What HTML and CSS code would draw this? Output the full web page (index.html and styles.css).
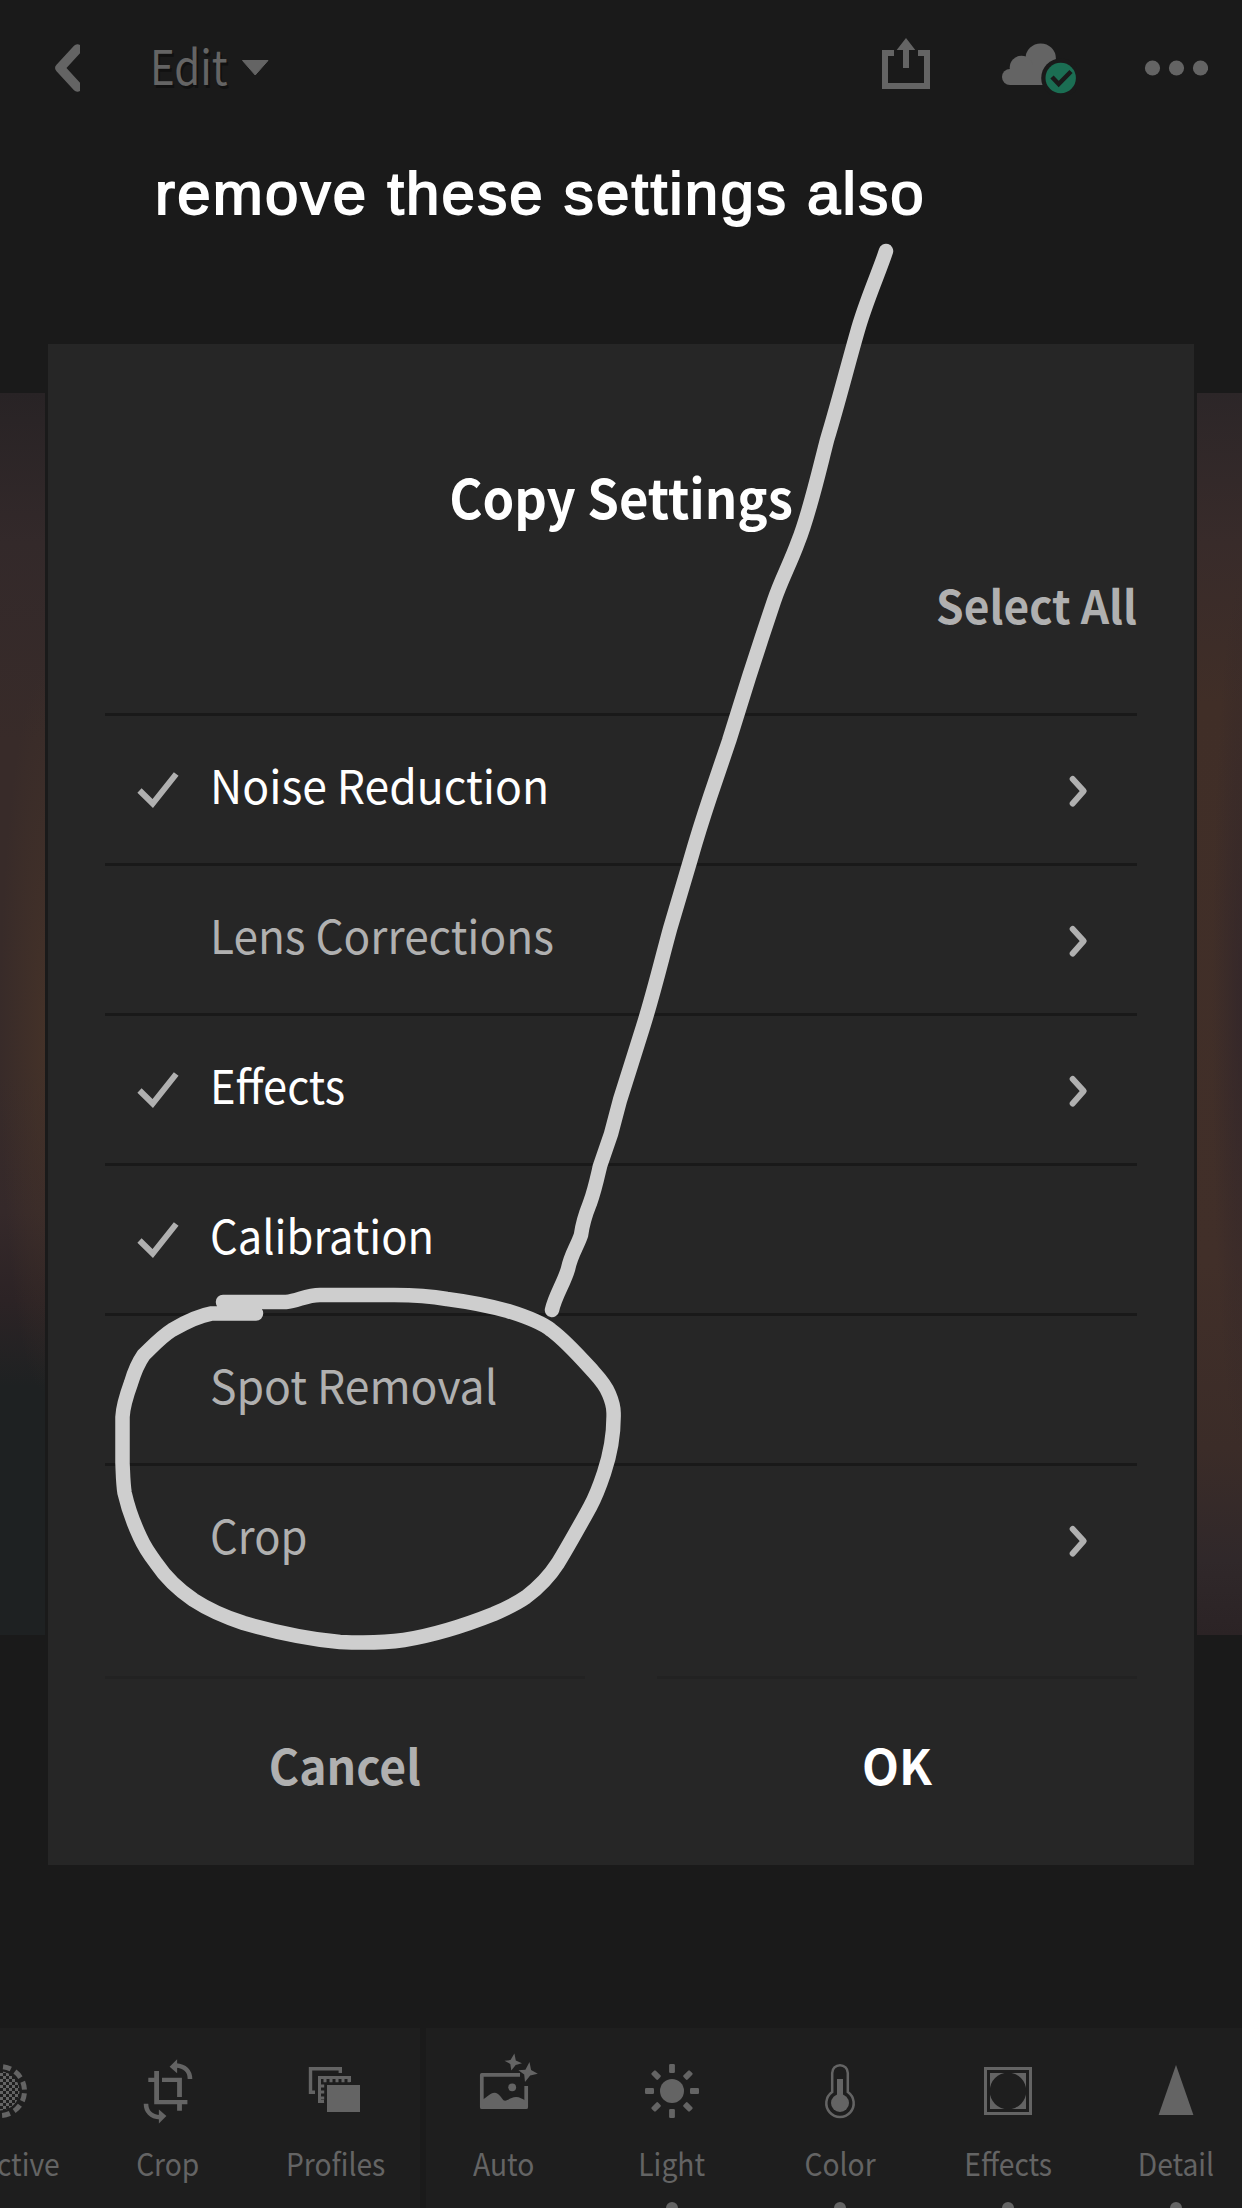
FILE: index.html
```html
<!DOCTYPE html>
<html lang="en">
<head>
<meta charset="utf-8">
<title>Copy Settings</title>
<link rel="stylesheet" href="styles.css">
</head>
<body>
<div class="app">
  <header class="topbar">
    <svg class="back" width="30" height="54" viewBox="50 41 30 54"><path d="M77.500 49 60 68l17.500 19" fill="none" stroke="#646464" stroke-width="9.500" stroke-linecap="round" stroke-linejoin="round"/></svg>
    <span class="mode">Edit</span>
    <svg class="caret" width="28" height="18" viewBox="241 60 28 18"><path d="M242.500 61.500h25.500L255.200 76z" fill="#646464" stroke="#646464" stroke-linejoin="round"/></svg>
    <svg class="share" width="50" height="54" viewBox="881 37 50 54" fill="#646464"><path d="M894 53h-9v33h42V53h-9" fill="none" stroke="#646464" stroke-width="6"/><path d="M906 38l9.300 12H909v18h-6V50h-6.300z"/></svg>
    <svg class="cloud" width="76" height="54" viewBox="1001 41 76 54">
      <g fill="#646464"><circle cx="1040.700" cy="58.600" r="15.200"/><circle cx="1021.500" cy="67.500" r="11.800"/><circle cx="1010" cy="77" r="8"/><path d="M1010 65h45v20h-45z"/></g>
      <circle cx="1060.700" cy="78" r="19.500" fill="#1a1a1a"/><circle cx="1060.700" cy="78" r="15.200" fill="#1b6e53"/>
      <path d="M1052 77l6.700 7 12.300-12.500" fill="none" stroke="#1a1a1a" stroke-width="4.500"/>
    </svg>
    <svg class="more" width="64" height="20" viewBox="1144 58 64 20" fill="#646464"><circle cx="1152.500" cy="68" r="7.600"/><circle cx="1176.500" cy="68" r="7.600"/><circle cx="1200.500" cy="68" r="7.600"/></svg>
  </header>
  <p class="note">remove these settings also</p>
  <main class="photo"></main>
  <nav class="tools">
    <div class="tool">
      <svg viewBox="-40 -40 80 80"><defs><pattern id="dots" width="6" height="6" patternUnits="userSpaceOnUse"><path d="M0 0h3v3H0zM3 3h3v3H3z" fill="#646464"/></pattern></defs><circle r="19.500" fill="url(#dots)"/><circle r="24.500" fill="none" stroke="#646464" stroke-width="5" stroke-dasharray="8 4.830" stroke-dashoffset="-2.400"/></svg>
      <span class="name">Selective</span>
    </div>
    <div class="tool">
      <svg viewBox="-40 -40 80 80" fill="#646464"><path d="M-13.800-20h4.800V9h28.400v4.300h-33.200zM-19.700-13.300h6v4.300h-6zM-6-13.300h19.900V6H9.100V-9H-6zM9.100 13.300h4.800v6.400H9.100z"/><g id="turn"><path d="M1.600-24.300L9.100-31.700v14z"/><path d="M8-25.500c9 .5 14 6 14 13.500" fill="none" stroke="#646464" stroke-width="4.600"/></g><use href="#turn" transform="rotate(180 0 .4)"/></svg>
      <span class="name">Crop</span>
    </div>
    <div class="tool">
      <svg viewBox="-40 -40 80 80"><path d="M4.300-18V-22.300H-25.500V1.200H-21" fill="none" stroke="#646464" stroke-width="3.400"/><path d="M13.500-9v-4.500h-30V10.500h4.500" fill="none" stroke="#646464" stroke-width="3"/><path d="M-12.500-10.500H14" stroke="#646464" stroke-width="3.400" stroke-dasharray="3 3"/><path d="M-13.500-6.500V12" stroke="#646464" stroke-width="3.400" stroke-dasharray="3 3"/><path d="M-9-6h33v27H-9z" fill="#646464"/></svg>
      <span class="name">Profiles</span>
    </div>
    <div class="tool first">
      <svg viewBox="-40 -40 80 80" fill="#646464"><path d="M16-16.200H-22.200V16.200H22.200V-5" fill="none" stroke="#646464" stroke-width="3.700" stroke-linejoin="round"/><path d="M-22 9C-16 6-14 1.800-9.500 1.800S-2 8-.5 9.300c3 2 7-3.200 12.500-3.200 4 0 6 2 9.500 3.500V17H-22z"/><circle cx="8.200" cy="-3.700" r="3.900"/><path d="M10.400-37.500l1.400 7 6.200 2.800-6.300 1.600-4.400 5.600-1-6.600-5.800-3.200 6-.6zM25.500-29l1.600 8 6.700 3.700-7.600 1.800-5.200 6.500-.8-7.600-5.800-4.200 7-.4z"/></svg>
      <span class="name">Auto</span>
    </div>
    <div class="tool edited">
      <svg viewBox="-40 -40 80 80"><circle r="12" fill="#646464"/><g fill="#646464"><g id="ray"><rect x="-2.900" y="-27" width="5.800" height="9" rx="1.200"/><rect x="-2.900" y="18" width="5.800" height="9" rx="1.200"/></g><use href="#ray" transform="rotate(45)"/><use href="#ray" transform="rotate(90)"/><use href="#ray" transform="rotate(135)"/></g></svg>
      <span class="name">Light</span>
    </div>
    <div class="tool edited">
      <svg viewBox="-40 -40 80 80"><path d="M-7.800 1V-18a7.800 7.800 0 0 1 15.600 0V1a13.700 13.700 0 1 1-15.600 0z" fill="none" stroke="#646464" stroke-width="2.500"/><circle cy="12" r="9" fill="#646464"/><path d="M-3-12h6V6h-6z" fill="#646464"/></svg>
      <span class="name">Color</span>
    </div>
    <div class="tool edited">
      <svg viewBox="-40 -40 80 80"><rect x="-22.500" y="-22.500" width="45" height="45" fill="none" stroke="#646464" stroke-width="3"/><path d="M-18-18h36v36h-36z" fill="#646464"/><circle r="18.300" fill="#1e1e1e"/></svg>
      <span class="name">Effects</span>
    </div>
    <div class="tool edited">
      <svg viewBox="-40 -40 80 80"><path d="M0-26l17.400 50h-34.800z" fill="#646464"/></svg>
      <span class="name">Detail</span>
    </div>
  </nav>

  <div class="overlay">
    <section class="dialog">
      <h1 class="title">Copy Settings</h1>
      <div class="all">Select All</div>
      <ul class="list">
        <li class="row on"><svg class="check" viewBox="136 771 44 40"><path d="M139.500 790.500l13.200 13 23.500-29.500"/></svg><span class="label wide">Noise Reduction</span><svg class="go" viewBox="1068 1074 21 34"><path d="M1072.700 1079l11 12-11 12.500"/></svg></li>
        <li class="row"><span class="label">Lens Corrections</span><svg class="go" viewBox="1068 1074 21 34"><path d="M1072.700 1079l11 12-11 12.500"/></svg></li>
        <li class="row on"><svg class="check" viewBox="136 771 44 40"><path d="M139.500 790.500l13.200 13 23.500-29.500"/></svg><span class="label tight">Effects</span><svg class="go" viewBox="1068 1074 21 34"><path d="M1072.700 1079l11 12-11 12.500"/></svg></li>
        <li class="row on"><svg class="check" viewBox="136 771 44 40"><path d="M139.500 790.500l13.200 13 23.500-29.500"/></svg><span class="label tight">Calibration</span></li>
        <li class="row"><span class="label wide">Spot Removal</span></li>
        <li class="row"><span class="label tight">Crop</span><svg class="go" viewBox="1068 1074 21 34"><path d="M1072.700 1079l11 12-11 12.500"/></svg></li>
      </ul>
      <div class="actions"><div class="btn"><span class="cancel">Cancel</span></div><div class="btn ok">OK</div></div>
    </section>
  </div>

  <svg class="marker" viewBox="0 0 1242 2208">
    <path d="M886 251C880 270 865 303 857 333C847 368 838 404 827 440C818 475 809 515 798 542C790 564 781 580 774 601L762 637L749 677L729 741L710 797C703 818 697 837 691 858L670 929C661 962 654 992 643 1027L632 1062L620 1100L611 1134L600 1166C597 1179 595 1189 590 1203C586 1213 583 1220 581 1235C577 1247 571 1254 568 1269C564 1283 555 1296 552 1310"/>
    <path d="M223 1302H286C298 1301 306 1295 320 1295H394C412 1295 430 1296 447 1299C470 1302 490 1306 508 1311C524 1316 541 1322 551 1330C566 1341 580 1357 593.600 1372C600 1379 606 1386 609 1394C612 1401 613.600 1407 613.600 1413C614 1434 610 1455 604 1473C600 1485 596 1496 590 1507C580 1525 569 1545 558 1563C549 1577 538 1588 526 1597C516 1604 505 1609 493.600 1614C466 1625 435 1635 404 1640C383 1643 361 1643 340 1642C308 1639 275 1632 243.600 1623C225 1617 209 1610 193.600 1600C179 1590 166 1578 156 1563C150 1555 144 1546 140 1537C133 1522 128 1508 124.600 1493C123 1483 123 1473 122.500 1463V1417C123 1405 127 1394 131 1383C134 1373 138 1363 143.600 1355C153 1346 161 1337 172 1330C184 1323 197 1316 211.400 1313.500H256"/>
  </svg>
</div>
</body>
</html>
```

FILE: styles.css
```css
* { box-sizing: border-box; }

body {
  margin: 0;
  background: #1a1a1a;
  color: #646464;
  font-family: "Noto Sans CJK SC", "Open Sans", sans-serif;
}

svg { display: block; flex: none; }

.app {
  position: relative;
  display: flex;
  flex-direction: column;
  width: 1242px;
  height: 2208px;
  overflow: hidden;
}

.topbar {
  display: flex;
  align-items: center;
  height: 136px;
  padding: 0 34px 0 50px;
}
.mode {
  margin-left: 70px;
  padding-bottom: 8px;
  width: 91px;
  font-size: 48px;
  line-height: 56px;
  text-shadow: 2px 3px 0 #111;
  transform: scaleX(.875);
  transform-origin: left;
}
.share { margin-left: 612px; margin-top: -8px; }
.cloud { margin-left: 70px; }
.more { margin-left: 67px; }

.note {
  margin: 23px 0 0 155px;
  color: #fff;
  font: 60px/70px "Liberation Sans", sans-serif;
  letter-spacing: 2.2px;
  -webkit-text-stroke: 1.8px #fff;
  white-space: nowrap;
}

.photo {
  height: 1242px;
  margin-top: 164px;
  background:
    linear-gradient(#282325, #33292a 12%, #382b29 28%, #382b29 55%, #35292a 66%, #2c2325 73%, #1e2122 80%, #1e2122) 0 0 / 45px 100% no-repeat,
    linear-gradient(#2c2628, #382b2a 12%, #402e27 25%, #412f29 70%, #3b2c28 85%, #30282a 94%, #2b2325) 1197px 0 / 45px 100% no-repeat;
  position: relative;
}
.photo::before,
.photo::after {
  content: "";
  position: absolute;
  top: 0;
  bottom: 0;
  width: 45px;
}
.photo::before {
  left: 0;
  background: radial-gradient(ellipse 45px 360px at 45px 640px, rgba(76, 54, 40, .6), transparent);
}
.photo::after {
  right: 0;
  background: radial-gradient(ellipse 30px 440px at 45px 620px, rgba(50, 38, 42, .8), transparent);
}

.tools {
  display: flex;
  height: 180px;
  margin: auto -84px 0;
  background: #1e1e1e;
}
.tool {
  position: relative;
  flex: none;
  width: 168px;
  display: flex;
  flex-direction: column;
  align-items: center;
  padding-top: 23px;
}
.tool svg { width: 80px; height: 80px; }
.tool .name {
  margin-top: 12px;
  font-size: 31px;
  line-height: 40px;
  transform: scaleX(.91);
}
.first { box-shadow: inset 6px 0 #1a1a1a; }
.edited::after {
  content: "";
  position: absolute;
  bottom: -6px;
  width: 12px;
  height: 12px;
  border-radius: 50%;
  background: #646464;
}

.overlay {
  position: absolute;
  inset: 0;
  padding-top: 344px;
  display: flex;
  justify-content: center;
  align-items: flex-start;
}
.dialog {
  width: 1146px;
  height: 1521px;
  padding: 0 57px;
  background: #262626;
  box-shadow: 0 0 0 3px #1a1a1a;
  display: flex;
  flex-direction: column;
}
.title {
  margin: 116px 0 0;
  color: #fff;
  font-size: 54px;
  line-height: 72px;
  font-weight: 700;
  text-align: center;
  transform: scaleX(.94);
}
.all {
  margin-top: 42px;
  color: #b0b0b0;
  font-size: 46px;
  line-height: 60px;
  font-weight: 700;
  text-align: right;
  transform: scaleX(.963);
  transform-origin: right;
}
.list { list-style: none; margin: 79px 0 0; padding: 0; }
.row {
  display: flex;
  height: 150px;
  padding: 0 48px 12px 105px;
  border-top: 3px solid #191919;
  align-items: center;
  color: #b0b0b0;
  font-size: 46.5px;
  line-height: 60px;
  white-space: nowrap;
}
.on { padding-left: 31px; color: #fff; }
.label { transform: scaleX(.95); transform-origin: left; }
.tight { transform: scaleX(.935); }
.wide { transform: scaleX(.957); }
.check { width: 44px; height: 40px; margin: 14px 30px 0 0; }
.go { width: 21px; height: 34px; margin: 15px 0 0 auto; }
.check path, .go path { fill: none; stroke: #b0b0b0; stroke-width: 6; }
.go path { stroke-linecap: round; stroke-linejoin: round; }

.actions { display: flex; gap: 72px; margin-top: 63px; }
.btn {
  flex: 1;
  border-top: 3px solid #222;
  padding-top: 53px;
  color: #b0b0b0;
  font-size: 48px;
  line-height: 64px;
  font-weight: 700;
  text-align: center;
}
.ok { color: #fff; }
.cancel { display: inline-block; transform: scaleX(.965); }

.marker {
  position: absolute;
  inset: 0;
  width: 1242px;
  height: 2208px;
  fill: none;
  stroke: #cecece;
  stroke-width: 14.5;
  stroke-linecap: round;
  stroke-linejoin: round;
  pointer-events: none;
}
```
